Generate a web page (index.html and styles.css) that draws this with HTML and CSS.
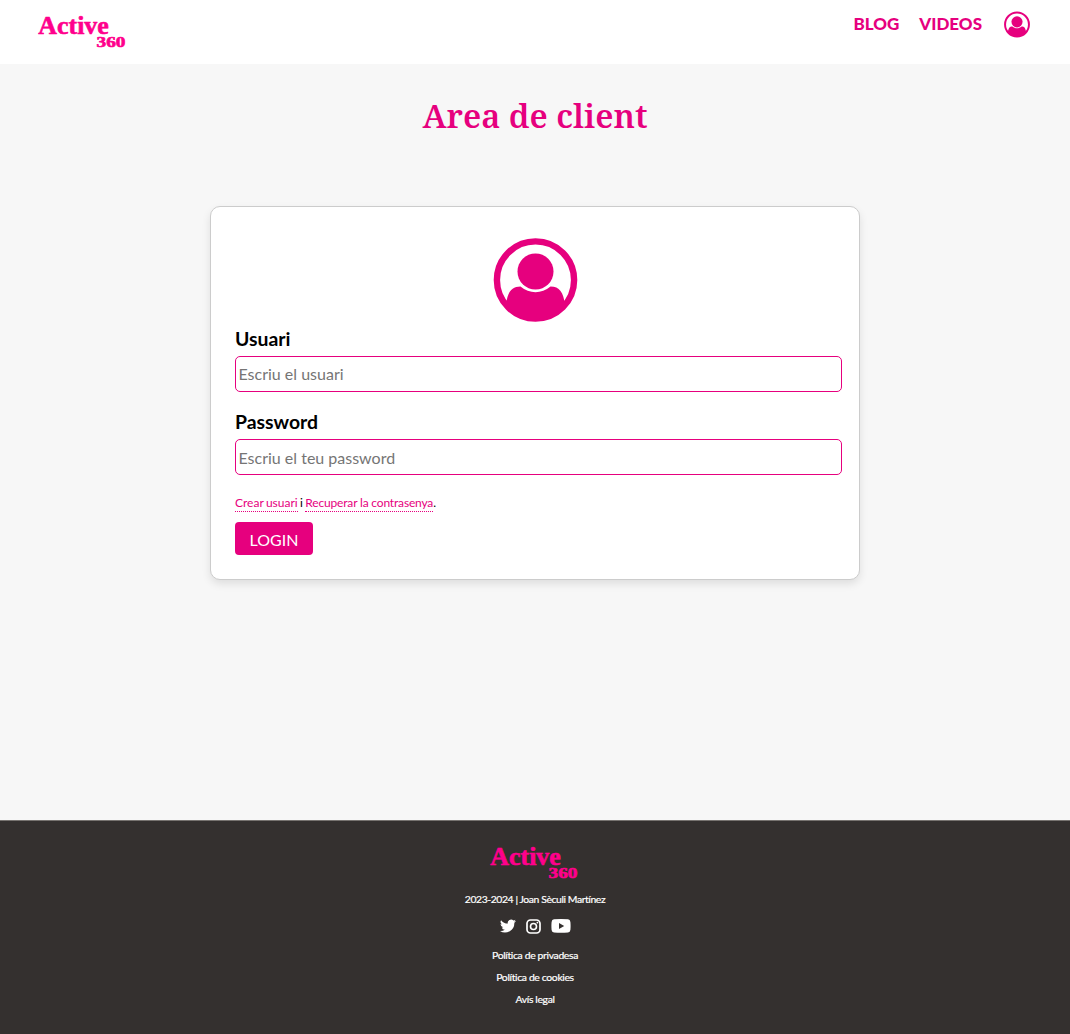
FILE: index.html
```html
<!DOCTYPE html>
<html lang="ca">
<head>
<meta charset="utf-8">
<title>Active 360 - Area de client</title>
<link rel="stylesheet" href="styles.css">
</head>
<body>
<svg class="defs" aria-hidden="true">
  <symbol id="user" viewBox="0 0 84 84">
    <circle cx="42" cy="42" r="38.6" fill="none" stroke="currentColor" stroke-width="6.4"/>
    <circle cx="42" cy="33.5" r="18"/>
    <path d="M12.5 67 C14 54 18 48.500 27 48.500 C36 56 48 56 57 48.500 C66 48.500 70 54 71.500 67 A38.600 38.600 0 0 1 12.500 67Z"/>
  </symbol>
</svg>
<header class="header">
  <a class="brand">
    <svg class="logo" viewBox="0 0 88 34">
      <text class="logo-name" x="0.300" y="18.800" textLength="70.5" lengthAdjust="spacingAndGlyphs">Active</text>
      <text class="logo-num" x="58.5" y="31.800" textLength="29" lengthAdjust="spacingAndGlyphs">360</text>
    </svg>
  </a>
  <nav class="nav">
    <a>BLOG</a>
    <a>VIDEOS</a>
    <svg class="nav-user"><use href="#user"/></svg>
  </nav>
</header>
<main class="main">
  <h1 class="title">Area de client</h1>
  <form class="card">
    <svg class="avatar"><use href="#user"/></svg>
    <label class="label" for="user-field">Usuari</label>
    <input class="field field-user" id="user-field" type="text" placeholder="Escriu el usuari">
    <label class="label" for="pass-field">Password</label>
    <input class="field" id="pass-field" type="password" placeholder="Escriu el teu password">
    <p class="links"><a>Crear usuari</a> i <a class="recover">Recuperar la contrasenya</a>.</p>
    <button class="login" type="button">LOGIN</button>
  </form>
</main>
<footer class="footer">
  <svg class="logo" viewBox="0 0 88 34">
    <text class="logo-name" x="0.300" y="18.800" textLength="70.5" lengthAdjust="spacingAndGlyphs">Active</text>
    <text class="logo-num" x="58.5" y="31.800" textLength="29" lengthAdjust="spacingAndGlyphs">360</text>
  </svg>
  <p class="copy">2023-2024 | Joan Sèculi Martínez</p>
  <div class="social">
    <svg width="16" height="14" viewBox="0 2 24 20"><path d="M23.950 4.600a10 10 0 0 1-2.800.8 4.900 4.900 0 0 0 2.100-2.700 9.900 9.900 0 0 1-3.100 1.200 4.900 4.900 0 0 0-8.400 4.500A14 14 0 0 1 1.600 3.200a4.900 4.900 0 0 0 1.500 6.500 4.900 4.900 0 0 1-2.200-.6v.1a4.900 4.900 0 0 0 3.900 4.800 5 5 0 0 1-2.200.1 4.900 4.900 0 0 0 4.600 3.400A9.900 9.900 0 0 1 0 19.500 14 14 0 0 0 21.500 7.100a10 10 0 0 0 2.450-2.500z"/></svg>
    <svg width="15" height="15" viewBox="0 0 15 15"><rect x="1" y="1" width="13" height="13" rx="3.500" fill="none" stroke="currentColor" stroke-width="1.700"/><circle cx="7.500" cy="7.500" r="3" fill="none" stroke="currentColor" stroke-width="1.600"/><circle cx="11.400" cy="3.600" r=".9"/></svg>
    <svg width="20" height="14" viewBox="0 0 20 14"><path fill-rule="evenodd" d="M3 .3Q10-.3 17 .3 19.200.5 19.400 3 19.800 7 19.400 11 19.200 13.300 17 13.500 10 14 3 13.500.8 13.300.6 11 .2 7 .6 3 .8.500 3 .3ZM8 4v6l5.200-3z"/></svg>
  </div>
  <a class="legal">Política de privadesa</a>
  <a class="legal">Política de cookies</a>
  <a class="legal">Avís legal</a>
</footer>
</body>
</html>
```
FILE: styles.css
```css
* { box-sizing: border-box; }
body {
  margin: 0;
  min-height: 1034px;
  display: flex;
  flex-direction: column;
  background: #f7f7f7;
  font-family: Lato, sans-serif;
  color: #000;
}
svg { display: block; fill: currentColor; }
.defs { position: absolute; width: 0; height: 0; }
.header {
  height: 64px;
  padding: 10px 40px 0 38px;
  display: flex;
  justify-content: space-between;
  align-items: flex-start;
  background: #fff;
}
.brand { padding-top: 5px; }
.logo { width: 88px; height: 34px; color: #ff008c; overflow: visible; }
.logo-name, .logo-num {
  font-family: "Liberation Serif", serif;
  font-weight: 700;
  stroke: currentColor;
  stroke-width: .6px;
}
.logo-name { font-size: 26px; }
.logo-num { font-size: 15px; }
.nav {
  display: flex;
  align-items: center;
  height: 28px;
  color: #e6007e;
  font-size: 17px;
  font-weight: 900;
}
.nav a { margin-right: 20px; padding-bottom: 2px; }
.nav-user { width: 26px; height: 27px; margin-left: 2px; }
.main { flex: 1; display: flex; flex-direction: column; align-items: center; }
.title {
  margin: 29px 0 0;
  height: 46px;
  font: 600 32.700px/46px "Noto Serif", "Droid Serif", "DejaVu Serif", serif;
  white-space: nowrap;
  color: #e6007e;
}
.card {
  width: 650px;
  height: 374px;
  margin-top: 67px;
  padding: 31px 17px 0 24px;
  display: flex;
  flex-direction: column;
  align-items: flex-start;
  background: #fff;
  border: 1px solid #ccc;
  border-radius: 10px;
  box-shadow: 0 4px 8px rgba(0, 0, 0, .1);
}
.avatar { width: 85px; height: 84px; margin-left: 258px; color: #e6007e; }
.label { margin-top: 4px; height: 30px; font-size: 19.400px; line-height: 26px; font-weight: 700; }
.field {
  width: 607px;
  height: 36px;
  margin-bottom: 13px;
  padding: 1px 2.500px;
  border: 1px solid #e6007e;
  border-radius: 5px;
  background: #fff;
  font: 16px Lato, sans-serif;
}
.field-user { padding-bottom: 3px; }
.field::placeholder { color: #757575; }
.links { margin: 6px 0 0; height: 28px; font-size: 12px; line-height: 17px; word-spacing: -.7px; }
.links a { display: inline-block; height: 18px; color: #e6007e; border-bottom: 1px dotted #e6007e; }
.links .recover { letter-spacing: -.17px; word-spacing: 0; }
.login {
  width: 78px;
  height: 33px;
  padding: 1px 0 0;
  border: 0;
  border-radius: 4px;
  background: #e6007e;
  color: #fff;
  font: 16px Lato, sans-serif;
}
.footer {
  height: 214px;
  padding-top: 25px;
  display: flex;
  flex-direction: column;
  align-items: center;
  background: #34302f;
  border-top: 1px solid #777370;
  color: #fff;
  font-size: 10.400px;
  letter-spacing: -.35px;
}
.footer .logo { margin-left: -2px; letter-spacing: 0; }
.copy { margin: 11px 0 0; line-height: 16px; letter-spacing: -.41px; }
.copy, .legal { -webkit-text-stroke: .2px #fff; }
.social { display: flex; align-items: center; gap: 10px; height: 16px; margin: 11px 0 13px; }
.legal { height: 22px; line-height: 16px; }
```
